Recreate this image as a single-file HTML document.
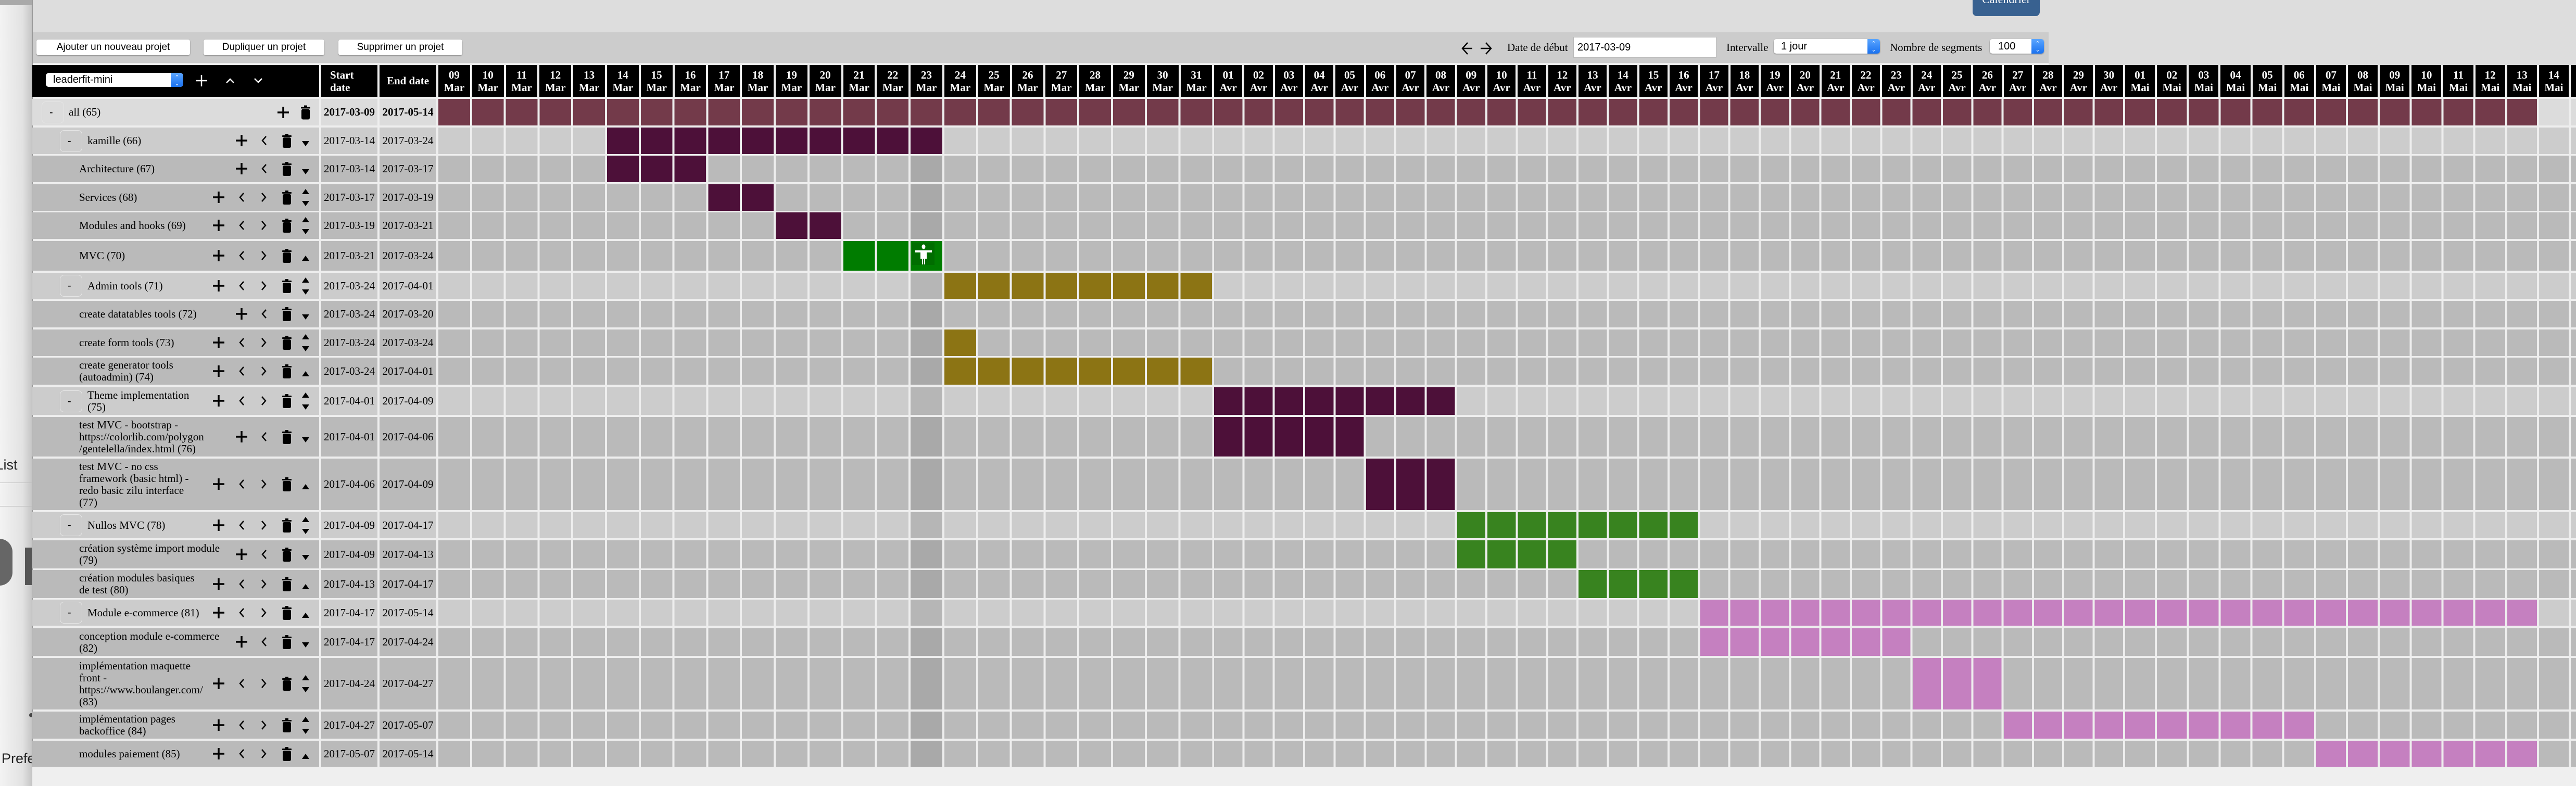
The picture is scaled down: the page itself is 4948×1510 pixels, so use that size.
<!DOCTYPE html>
<html><head><meta charset="utf-8"><style>
*{box-sizing:border-box;margin:0;padding:0}
body{width:4948px;height:1510px;position:relative;overflow:hidden;background:#eee;font-family:"Liberation Serif",serif;font-size:21px;line-height:23px;color:#000}
.a{position:absolute}
.row{position:absolute;left:0;width:4948px}
.row>div{position:absolute;top:0;bottom:0}
.lc{left:62px;width:551px}
.sd{left:617px;width:108px;display:flex;align-items:center;justify-content:center}
.ed{left:729px;width:109px;display:flex;align-items:center;justify-content:center}
.g{left:842px;right:0}
.P>div{background:#ccc}.C>div{background:#bababa}.A>div{background:#dcdcdc}
.row>.b{background:#4d1039}
.row>.gr{background:#007c00}.row>.ol{background:#8c7414}.row>.g2{background:#38831f}.row>.pk{background:#c580c0}.row>.mr{background:#733a4a}
.P>.td{background:#b6b6b6}.C>.td{background:#a9a9a9}
.tx{position:absolute;top:0;bottom:0;display:flex;align-items:center;width:290px}
.tg{position:absolute;top:50%;margin-top:-21px;width:43px;height:42px;border:1px solid #e6e6e6;border-radius:8px;font-family:"Liberation Sans",sans-serif;font-size:20px;line-height:40px;padding-left:14px}
.i{position:absolute;top:50%;transform:translateY(-50%)}
.u{position:absolute;left:518px}
.hd{position:absolute;top:125px;height:61px;background:#000;color:#fff;font-weight:bold}
.days{position:absolute;top:125px;height:61px;display:flex}
.days i{font-style:normal;flex:none;height:61px;background:#000;color:#fff;font-weight:bold;text-align:center;padding-top:7px;line-height:24px;border-right:4px solid #eee}
.m i{width:64.8px}.v i{width:58.33px}.y i{width:61.15px}
.btn{position:absolute;top:76px;height:30px;background:#fff;border-radius:4px;box-shadow:0 1px 2px rgba(0,0,0,.35);font-family:"Liberation Sans",sans-serif;font-size:19px;line-height:30px;text-align:center}
.sel{position:absolute;background:#fff;border-radius:5px;box-shadow:0 1px 2px rgba(0,0,0,.4);font-family:"Liberation Sans",sans-serif;font-size:20px;overflow:hidden}
.sel b{position:absolute;right:0;top:0;bottom:0;width:24px;background:linear-gradient(#5aa5ff,#1a72f0);color:#fff;font-size:11px;line-height:12px;text-align:center;padding-top:3px;font-weight:normal}
</style></head><body>
<!-- top backgrounds -->
<div class="a" style="left:0;top:0;width:4948px;height:121px;background:#ddd"></div>
<div class="a" style="left:3935px;top:121px;width:1013px;height:4px;background:#ddd"></div>
<div class="a" style="left:62px;top:62px;width:3873px;height:59px;background:#ccc"></div>
<div class="a" style="left:0;top:0;width:62px;height:1510px;background:linear-gradient(to right,#f3f3f3,#e2e2e2 70%,#c4c4c4);overflow:hidden;font-family:'Liberation Sans',sans-serif;color:#222">
 <div class="a" style="left:0;top:0;width:62px;height:10px;background:#a9a9a9"></div>
 <div class="a" style="left:-22px;top:882px;font-size:27px">l List</div>
 <div class="a" style="left:0;top:927px;width:62px;height:1px;background:#bbb"></div>
 <div class="a" style="left:0;top:972px;width:62px;height:1px;background:#bbb"></div>
 <div class="a" style="left:-14px;top:1035px;width:38px;height:90px;border-radius:0 40px 40px 20px;background:#666"></div>
 <div class="a" style="left:48px;top:1052px;width:14px;height:72px;background:#555"></div>
 <div class="a" style="left:56px;top:1370px;width:8px;height:8px;border-radius:4px;background:#444"></div>
 <div class="a" style="left:3px;top:1446px;font-size:27px">Prefe</div>
</div>
<div class="a" style="left:61px;top:0;width:2px;height:1510px;background:#9a9a9a"></div>

<!-- calendrier -->
<div class="a" style="left:3789px;top:0;width:129px;height:31px;background:#386190;border-radius:0 0 8px 8px;overflow:hidden;color:#fff;text-align:center;font-size:22px;line-height:22px"><div style="margin-top:-12px">Calendrier</div></div>

<!-- buttons -->
<div class="btn" style="left:70px;width:295px">Ajouter un nouveau projet</div>
<div class="btn" style="left:391px;width:232px">Dupliquer un projet</div>
<div class="btn" style="left:650px;width:238px">Supprimer un projet</div>

<!-- right toolbar -->
<svg class="a" style="left:2806px;top:79px" width="64" height="28"><path d="M22 14H3M13 3L3 14L13 25" fill="none" stroke="#000" stroke-width="2.5"/><path d="M38 14H58M48 3L58 14L48 25" fill="none" stroke="#000" stroke-width="2.5"/></svg>
<div class="a" style="left:2895px;top:80px">Date de début</div>
<div class="a" style="left:3022px;top:71px;width:275px;height:40px;background:#fff;border:1px solid #bbb;font-family:'Liberation Sans',sans-serif;font-size:20px;line-height:38px;padding-left:7px">2017-03-09</div>
<div class="a" style="left:3316px;top:80px">Intervalle</div>
<div class="sel" style="left:3407px;top:75px;width:204px;height:28px;line-height:28px;padding-left:14px">1 jour<b>&#8963;<br>&#8964;</b></div>
<div class="a" style="left:3630px;top:80px">Nombre de segments</div>
<div class="sel" style="left:3822px;top:75px;width:104px;height:28px;line-height:28px;padding-left:16px">100<b>&#8963;<br>&#8964;</b></div>

<!-- header -->
<div class="hd" style="left:62px;width:551px">
 <div class="sel" style="left:26px;top:15px;width:264px;height:27px;line-height:27px;padding-left:14px;font-weight:normal;color:#000;border-radius:6px">leaderfit-mini<b>&#8963;<br>&#8964;</b></div>
 <svg class="a" style="left:314px;top:19px" width="22" height="22"><path d="M11 0V22M0 11H22" stroke="#fff" stroke-width="2.5"/></svg>
 <svg class="a" style="left:371px;top:24px" width="18" height="12"><path d="M2 10L9 3L16 10" fill="none" stroke="#fff" stroke-width="2.5"/></svg>
 <svg class="a" style="left:425px;top:24px" width="18" height="12"><path d="M2 2L9 9L16 2" fill="none" stroke="#fff" stroke-width="2.5"/></svg>
</div>
<div class="hd" style="left:617px;width:108px;padding:7px 0 0 17px;line-height:24px">Start<br>date</div>
<div class="hd" style="left:729px;width:109px;padding-top:19px;text-align:center">End date</div>
<div class="days m" style="left:842px">
<i>09<br>Mar</i><i>10<br>Mar</i><i>11<br>Mar</i><i>12<br>Mar</i><i>13<br>Mar</i><i>14<br>Mar</i><i>15<br>Mar</i><i>16<br>Mar</i><i>17<br>Mar</i><i>18<br>Mar</i><i>19<br>Mar</i><i>20<br>Mar</i><i>21<br>Mar</i><i>22<br>Mar</i><i>23<br>Mar</i><i>24<br>Mar</i><i>25<br>Mar</i><i>26<br>Mar</i><i>27<br>Mar</i><i>28<br>Mar</i><i>29<br>Mar</i><i>30<br>Mar</i><i>31<br>Mar</i>
</div>
<div class="days v" style="left:2332px">
<i>01<br>Avr</i><i>02<br>Avr</i><i>03<br>Avr</i><i>04<br>Avr</i><i>05<br>Avr</i><i>06<br>Avr</i><i>07<br>Avr</i><i>08<br>Avr</i><i>09<br>Avr</i><i>10<br>Avr</i><i>11<br>Avr</i><i>12<br>Avr</i><i>13<br>Avr</i><i>14<br>Avr</i><i>15<br>Avr</i><i>16<br>Avr</i><i>17<br>Avr</i><i>18<br>Avr</i><i>19<br>Avr</i><i>20<br>Avr</i><i>21<br>Avr</i><i>22<br>Avr</i><i>23<br>Avr</i><i>24<br>Avr</i><i>25<br>Avr</i><i>26<br>Avr</i><i>27<br>Avr</i><i>28<br>Avr</i><i>29<br>Avr</i><i>30<br>Avr</i>
</div>
<div class="days y" style="left:4082px">
<i>01<br>Mai</i><i>02<br>Mai</i><i>03<br>Mai</i><i>04<br>Mai</i><i>05<br>Mai</i><i>06<br>Mai</i><i>07<br>Mai</i><i>08<br>Mai</i><i>09<br>Mai</i><i>10<br>Mai</i><i>11<br>Mai</i><i>12<br>Mai</i><i>13<br>Mai</i><i>14<br>Mai</i><i>15<br>Mai</i>
</div>

<!-- ROWS -->
<div class="row A" style="top:190px;height:51px"><div class="lc"><span class="tg" style="left:18px">-</span><span class="tx" style="left:70px">all (65)</span>
<svg class="i" style="left:471px" width="22" height="22"><path d="M11 0V22M0 11H22" stroke="#000" stroke-width="3.5"/></svg>
<svg class="i" style="left:515px" width="20" height="27"><rect x="7" y="0" width="6" height="3"/><rect x="1" y="3" width="18" height="3" rx="1"/><rect x="2" y="7" width="16" height="20" rx="3"/></svg>
</div><div class="sd"><b>2017-03-09</b></div><div class="ed"><b>2017-05-14</b></div><div class="g"></div><div class="mr" style="left:842px;width:4031px"></div></div>

<div class="row P" style="top:245px;height:51px"><div class="lc"><span class="tg" style="left:53px">-</span><span class="tx" style="left:106px">kamille (66)</span></div><div class="sd">2017-03-14</div><div class="ed">2017-03-24</div><div class="g"></div><div class="b" style="left:1166px;width:644px"></div></div>
<div class="row C" style="top:299px;height:51px"><div class="lc"><span class="tx" style="left:90px">Architecture (67)</span></div><div class="sd">2017-03-14</div><div class="ed">2017-03-17</div><div class="g"></div><div class="td" style="left:1749px;width:61px"></div><div class="b" style="left:1166px;width:190.4px"></div></div>
<div class="row C" style="top:354px;height:51px"><div class="lc"><span class="tx" style="left:90px">Services (68)</span></div><div class="sd">2017-03-17</div><div class="ed">2017-03-19</div><div class="g"></div><div class="td" style="left:1749px;width:61px"></div><div class="b" style="left:1360.4px;width:125.6px"></div></div>
<div class="row C" style="top:408px;height:51px"><div class="lc"><span class="tx" style="left:90px">Modules and hooks (69)</span></div><div class="sd">2017-03-19</div><div class="ed">2017-03-21</div><div class="g"></div><div class="td" style="left:1749px;width:61px"></div><div class="b" style="left:1490px;width:125.6px"></div></div>
<div class="row C" style="top:463px;height:57px"><div class="lc"><span class="tx" style="left:90px">MVC (70)</span></div><div class="sd">2017-03-21</div><div class="ed">2017-03-24</div><div class="g"></div><div class="gr" style="left:1619.6px;width:190.4px"></div>
<div style="left:1752px;top:3px;bottom:auto;width:43px;height:43px;background:#006d00"></div>
<svg style="position:absolute;left:1756px;top:6px" width="36" height="40"><ellipse cx="18" cy="5" rx="3.5" ry="4.5" fill="#fff"/><path d="M2 12H34V16H24V28H21V39H19V28H17V39H15V28H12V16H2Z" fill="#fff"/></svg></div>
<div class="row P" style="top:524px;height:50px"><div class="lc"><span class="tg" style="left:53px">-</span><span class="tx" style="left:106px">Admin tools (71)</span></div><div class="sd">2017-03-24</div><div class="ed">2017-04-01</div><div class="g"></div><div class="td" style="left:1749px;width:61px"></div><div class="ol" style="left:1814px;width:514.4px"></div></div>
<div class="row C" style="top:578px;height:51px"><div class="lc"><span class="tx" style="left:90px">create datatables tools (72)</span></div><div class="sd">2017-03-24</div><div class="ed">2017-03-20</div><div class="g"></div><div class="td" style="left:1749px;width:61px"></div></div>
<div class="row C" style="top:633px;height:51px"><div class="lc"><span class="tx" style="left:90px">create form tools (73)</span></div><div class="sd">2017-03-24</div><div class="ed">2017-03-24</div><div class="g"></div><div class="td" style="left:1749px;width:61px"></div><div class="ol" style="left:1814px;width:60.8px"></div></div>
<div class="row C" style="top:687px;height:52px"><div class="lc"><span class="tx" style="left:90px">create generator tools<br>(autoadmin) (74)</span></div><div class="sd">2017-03-24</div><div class="ed">2017-04-01</div><div class="g"></div><div class="td" style="left:1749px;width:61px"></div><div class="ol" style="left:1814px;width:514.4px"></div></div>
<div class="row P" style="top:744px;height:53px"><div class="lc"><span class="tg" style="left:53px">-</span><span class="tx" style="left:106px;width:220px">Theme implementation<br>(75)</span></div><div class="sd">2017-04-01</div><div class="ed">2017-04-09</div><div class="g"></div><div class="td" style="left:1749px;width:61px"></div><div class="b" style="left:2332px;width:462.6px"></div></div>
<div class="row C" style="top:801px;height:76px"><div class="lc"><span class="tx" style="left:90px">test MVC - bootstrap -<br>https://colorlib.com/polygon<br>/gentelella/index.html (76)</span></div><div class="sd">2017-04-01</div><div class="ed">2017-04-06</div><div class="g"></div><div class="td" style="left:1749px;width:61px"></div><div class="b" style="left:2332px;width:287.6px"></div></div>
<div class="row C" style="top:881px;height:99px"><div class="lc"><span class="tx" style="left:90px">test MVC - no css<br>framework (basic html) -<br>redo basic zilu interface<br>(77)</span></div><div class="sd">2017-04-06</div><div class="ed">2017-04-09</div><div class="g"></div><div class="td" style="left:1749px;width:61px"></div><div class="b" style="left:2623.6px;width:171px"></div></div>
<div class="row P" style="top:984px;height:50px"><div class="lc"><span class="tg" style="left:53px">-</span><span class="tx" style="left:106px">Nullos MVC (78)</span></div><div class="sd">2017-04-09</div><div class="ed">2017-04-17</div><div class="g"></div><div class="td" style="left:1749px;width:61px"></div><div class="g2" style="left:2798.6px;width:462.6px"></div></div>
<div class="row C" style="top:1038px;height:54px"><div class="lc"><span class="tx" style="left:90px">création système import module<br>(79)</span></div><div class="sd">2017-04-09</div><div class="ed">2017-04-13</div><div class="g"></div><div class="td" style="left:1749px;width:61px"></div><div class="g2" style="left:2798.6px;width:229.3px"></div></div>
<div class="row C" style="top:1095px;height:54px"><div class="lc"><span class="tx" style="left:90px">création modules basiques<br>de test (80)</span></div><div class="sd">2017-04-13</div><div class="ed">2017-04-17</div><div class="g"></div><div class="td" style="left:1749px;width:61px"></div><div class="g2" style="left:3032px;width:229.3px"></div></div>
<div class="row P" style="top:1152px;height:50px"><div class="lc"><span class="tg" style="left:53px">-</span><span class="tx" style="left:106px">Module e-commerce (81)</span></div><div class="sd">2017-04-17</div><div class="ed">2017-05-14</div><div class="g"></div><div class="td" style="left:1749px;width:61px"></div><div class="pk" style="left:3265.3px;width:1607.7px"></div></div>
<div class="row C" style="top:1207px;height:53px"><div class="lc"><span class="tx" style="left:90px">conception module e-commerce<br>(82)</span></div><div class="sd">2017-04-17</div><div class="ed">2017-04-24</div><div class="g"></div><div class="td" style="left:1749px;width:61px"></div><div class="pk" style="left:3265.3px;width:404.3px"></div></div>
<div class="row C" style="top:1264px;height:99px"><div class="lc"><span class="tx" style="left:90px">implémentation maquette<br>front -<br>https://www.boulanger.com/<br>(83)</span></div><div class="sd">2017-04-24</div><div class="ed">2017-04-27</div><div class="g"></div><div class="td" style="left:1749px;width:61px"></div><div class="pk" style="left:3673.6px;width:171px"></div></div>
<div class="row C" style="top:1367px;height:52px"><div class="lc"><span class="tx" style="left:90px">implémentation pages<br>backoffice (84)</span></div><div class="sd">2017-04-27</div><div class="ed">2017-05-07</div><div class="g"></div><div class="td" style="left:1749px;width:61px"></div><div class="pk" style="left:3848.6px;width:596.3px"></div></div>
<div class="row C" style="top:1423px;height:50px"><div class="lc"><span class="tx" style="left:90px">modules paiement (85)</span></div><div class="sd">2017-05-07</div><div class="ed">2017-05-14</div><div class="g"></div><div class="td" style="left:1749px;width:61px"></div><div class="pk" style="left:4448.9px;width:424px"></div></div>

<!-- vertical gap overlay -->
<div class="a" style="left:842px;top:186px;width:1490.4px;height:1287px;background:repeating-linear-gradient(to right,transparent 0 60.8px,#eee 60.8px 64.8px)"></div>
<div class="a" style="left:2332px;top:186px;width:1750px;height:1287px;background:repeating-linear-gradient(to right,transparent 0 54.33px,#eee 54.33px 58.33px)"></div>
<div class="a" style="left:4082px;top:186px;width:866px;height:1287px;background:repeating-linear-gradient(to right,transparent 0 57.15px,#eee 57.15px 61.15px)"></div>
<div class="a" style="left:62px;top:1473px;width:4886px;height:37px;background:#efefef"></div>

<!-- ICONS (page coords) -->
<svg width="0" height="0" style="position:absolute"><defs>
<g id="pl"><path d="M11 0V22M0 11H22" stroke="#000" stroke-width="3.5"/></g>
<g id="lt"><path d="M10 2L3 10L10 18" fill="none" stroke="#000" stroke-width="2.5"/></g>
<g id="gt"><path d="M2 2L9 10L2 18" fill="none" stroke="#000" stroke-width="2.5"/></g>
<g id="tr"><rect x="7" y="0" width="6" height="3"/><rect x="1" y="3" width="18" height="3" rx="1"/><rect x="2" y="7" width="16" height="20" rx="3"/></g>
<g id="up"><path d="M7 0L14 10H0Z"/></g>
<g id="dn"><path d="M0 0H14L7 10Z"/></g>
</defs></svg>
<div class="a" style="left:0;top:0">
<!-- rows: center y, variant -->
<!-- kamille c=270 noGT dn -->
<svg class="a" style="left:453px;top:259px" width="22" height="22"><use href="#pl"/></svg><svg class="a" style="left:501px;top:260px" width="12" height="20"><use href="#lt"/></svg><svg class="a" style="left:541px;top:257px" width="20" height="27"><use href="#tr"/></svg><svg class="a" style="left:580px;top:271px" width="14" height="10"><use href="#dn"/></svg>
<!-- Architecture c=324 -->
<svg class="a" style="left:453px;top:313px" width="22" height="22"><use href="#pl"/></svg><svg class="a" style="left:501px;top:314px" width="12" height="20"><use href="#lt"/></svg><svg class="a" style="left:541px;top:311px" width="20" height="27"><use href="#tr"/></svg><svg class="a" style="left:580px;top:325px" width="14" height="10"><use href="#dn"/></svg>
<!-- Services c=379 both -->
<svg class="a" style="left:409px;top:368px" width="22" height="22"><use href="#pl"/></svg><svg class="a" style="left:458px;top:369px" width="12" height="20"><use href="#lt"/></svg><svg class="a" style="left:501px;top:369px" width="12" height="20"><use href="#gt"/></svg><svg class="a" style="left:541px;top:366px" width="20" height="27"><use href="#tr"/></svg><svg class="a" style="left:580px;top:363px" width="14" height="10"><use href="#up"/></svg><svg class="a" style="left:580px;top:386px" width="14" height="10"><use href="#dn"/></svg>
<!-- Modules c=433 both -->
<svg class="a" style="left:409px;top:422px" width="22" height="22"><use href="#pl"/></svg><svg class="a" style="left:458px;top:423px" width="12" height="20"><use href="#lt"/></svg><svg class="a" style="left:501px;top:423px" width="12" height="20"><use href="#gt"/></svg><svg class="a" style="left:541px;top:420px" width="20" height="27"><use href="#tr"/></svg><svg class="a" style="left:580px;top:417px" width="14" height="10"><use href="#up"/></svg><svg class="a" style="left:580px;top:440px" width="14" height="10"><use href="#dn"/></svg>
<!-- MVC c=491 up -->
<svg class="a" style="left:409px;top:480px" width="22" height="22"><use href="#pl"/></svg><svg class="a" style="left:458px;top:481px" width="12" height="20"><use href="#lt"/></svg><svg class="a" style="left:501px;top:481px" width="12" height="20"><use href="#gt"/></svg><svg class="a" style="left:541px;top:478px" width="20" height="27"><use href="#tr"/></svg><svg class="a" style="left:580px;top:491px" width="14" height="10"><use href="#up"/></svg>
<!-- Admin c=549 both -->
<svg class="a" style="left:409px;top:538px" width="22" height="22"><use href="#pl"/></svg><svg class="a" style="left:458px;top:539px" width="12" height="20"><use href="#lt"/></svg><svg class="a" style="left:501px;top:539px" width="12" height="20"><use href="#gt"/></svg><svg class="a" style="left:541px;top:536px" width="20" height="27"><use href="#tr"/></svg><svg class="a" style="left:580px;top:533px" width="14" height="10"><use href="#up"/></svg><svg class="a" style="left:580px;top:556px" width="14" height="10"><use href="#dn"/></svg>
<!-- datatables c=603 noGT dn -->
<svg class="a" style="left:453px;top:592px" width="22" height="22"><use href="#pl"/></svg><svg class="a" style="left:501px;top:593px" width="12" height="20"><use href="#lt"/></svg><svg class="a" style="left:541px;top:590px" width="20" height="27"><use href="#tr"/></svg><svg class="a" style="left:580px;top:604px" width="14" height="10"><use href="#dn"/></svg>
<!-- form c=658 both -->
<svg class="a" style="left:409px;top:647px" width="22" height="22"><use href="#pl"/></svg><svg class="a" style="left:458px;top:648px" width="12" height="20"><use href="#lt"/></svg><svg class="a" style="left:501px;top:648px" width="12" height="20"><use href="#gt"/></svg><svg class="a" style="left:541px;top:645px" width="20" height="27"><use href="#tr"/></svg><svg class="a" style="left:580px;top:642px" width="14" height="10"><use href="#up"/></svg><svg class="a" style="left:580px;top:665px" width="14" height="10"><use href="#dn"/></svg>
<!-- generator c=713 up -->
<svg class="a" style="left:409px;top:702px" width="22" height="22"><use href="#pl"/></svg><svg class="a" style="left:458px;top:703px" width="12" height="20"><use href="#lt"/></svg><svg class="a" style="left:501px;top:703px" width="12" height="20"><use href="#gt"/></svg><svg class="a" style="left:541px;top:700px" width="20" height="27"><use href="#tr"/></svg><svg class="a" style="left:580px;top:713px" width="14" height="10"><use href="#up"/></svg>
<!-- Theme c=770 both -->
<svg class="a" style="left:409px;top:759px" width="22" height="22"><use href="#pl"/></svg><svg class="a" style="left:458px;top:760px" width="12" height="20"><use href="#lt"/></svg><svg class="a" style="left:501px;top:760px" width="12" height="20"><use href="#gt"/></svg><svg class="a" style="left:541px;top:757px" width="20" height="27"><use href="#tr"/></svg><svg class="a" style="left:580px;top:754px" width="14" height="10"><use href="#up"/></svg><svg class="a" style="left:580px;top:777px" width="14" height="10"><use href="#dn"/></svg>
<!-- bootstrap c=839 noGT dn -->
<svg class="a" style="left:453px;top:828px" width="22" height="22"><use href="#pl"/></svg><svg class="a" style="left:501px;top:829px" width="12" height="20"><use href="#lt"/></svg><svg class="a" style="left:541px;top:826px" width="20" height="27"><use href="#tr"/></svg><svg class="a" style="left:580px;top:840px" width="14" height="10"><use href="#dn"/></svg>
<!-- nocss c=930 up -->
<svg class="a" style="left:409px;top:919px" width="22" height="22"><use href="#pl"/></svg><svg class="a" style="left:458px;top:920px" width="12" height="20"><use href="#lt"/></svg><svg class="a" style="left:501px;top:920px" width="12" height="20"><use href="#gt"/></svg><svg class="a" style="left:541px;top:917px" width="20" height="27"><use href="#tr"/></svg><svg class="a" style="left:580px;top:930px" width="14" height="10"><use href="#up"/></svg>
<!-- Nullos c=1009 both -->
<svg class="a" style="left:409px;top:998px" width="22" height="22"><use href="#pl"/></svg><svg class="a" style="left:458px;top:999px" width="12" height="20"><use href="#lt"/></svg><svg class="a" style="left:501px;top:999px" width="12" height="20"><use href="#gt"/></svg><svg class="a" style="left:541px;top:996px" width="20" height="27"><use href="#tr"/></svg><svg class="a" style="left:580px;top:993px" width="14" height="10"><use href="#up"/></svg><svg class="a" style="left:580px;top:1016px" width="14" height="10"><use href="#dn"/></svg>
<!-- import c=1065 noGT dn -->
<svg class="a" style="left:453px;top:1054px" width="22" height="22"><use href="#pl"/></svg><svg class="a" style="left:501px;top:1055px" width="12" height="20"><use href="#lt"/></svg><svg class="a" style="left:541px;top:1052px" width="20" height="27"><use href="#tr"/></svg><svg class="a" style="left:580px;top:1066px" width="14" height="10"><use href="#dn"/></svg>
<!-- basiques c=1122 up -->
<svg class="a" style="left:409px;top:1111px" width="22" height="22"><use href="#pl"/></svg><svg class="a" style="left:458px;top:1112px" width="12" height="20"><use href="#lt"/></svg><svg class="a" style="left:501px;top:1112px" width="12" height="20"><use href="#gt"/></svg><svg class="a" style="left:541px;top:1109px" width="20" height="27"><use href="#tr"/></svg><svg class="a" style="left:580px;top:1122px" width="14" height="10"><use href="#up"/></svg>
<!-- ecommerce c=1177 up -->
<svg class="a" style="left:409px;top:1166px" width="22" height="22"><use href="#pl"/></svg><svg class="a" style="left:458px;top:1167px" width="12" height="20"><use href="#lt"/></svg><svg class="a" style="left:501px;top:1167px" width="12" height="20"><use href="#gt"/></svg><svg class="a" style="left:541px;top:1164px" width="20" height="27"><use href="#tr"/></svg><svg class="a" style="left:580px;top:1177px" width="14" height="10"><use href="#up"/></svg>
<!-- conception c=1233 noGT dn -->
<svg class="a" style="left:453px;top:1222px" width="22" height="22"><use href="#pl"/></svg><svg class="a" style="left:501px;top:1223px" width="12" height="20"><use href="#lt"/></svg><svg class="a" style="left:541px;top:1220px" width="20" height="27"><use href="#tr"/></svg><svg class="a" style="left:580px;top:1234px" width="14" height="10"><use href="#dn"/></svg>
<!-- maquette c=1313 both -->
<svg class="a" style="left:409px;top:1302px" width="22" height="22"><use href="#pl"/></svg><svg class="a" style="left:458px;top:1303px" width="12" height="20"><use href="#lt"/></svg><svg class="a" style="left:501px;top:1303px" width="12" height="20"><use href="#gt"/></svg><svg class="a" style="left:541px;top:1300px" width="20" height="27"><use href="#tr"/></svg><svg class="a" style="left:580px;top:1297px" width="14" height="10"><use href="#up"/></svg><svg class="a" style="left:580px;top:1320px" width="14" height="10"><use href="#dn"/></svg>
<!-- pages c=1393 both -->
<svg class="a" style="left:409px;top:1382px" width="22" height="22"><use href="#pl"/></svg><svg class="a" style="left:458px;top:1383px" width="12" height="20"><use href="#lt"/></svg><svg class="a" style="left:501px;top:1383px" width="12" height="20"><use href="#gt"/></svg><svg class="a" style="left:541px;top:1380px" width="20" height="27"><use href="#tr"/></svg><svg class="a" style="left:580px;top:1377px" width="14" height="10"><use href="#up"/></svg><svg class="a" style="left:580px;top:1400px" width="14" height="10"><use href="#dn"/></svg>
<!-- paiement c=1448 up -->
<svg class="a" style="left:409px;top:1437px" width="22" height="22"><use href="#pl"/></svg><svg class="a" style="left:458px;top:1438px" width="12" height="20"><use href="#lt"/></svg><svg class="a" style="left:501px;top:1438px" width="12" height="20"><use href="#gt"/></svg><svg class="a" style="left:541px;top:1435px" width="20" height="27"><use href="#tr"/></svg><svg class="a" style="left:580px;top:1448px" width="14" height="10"><use href="#up"/></svg>
</div>
</body></html>
